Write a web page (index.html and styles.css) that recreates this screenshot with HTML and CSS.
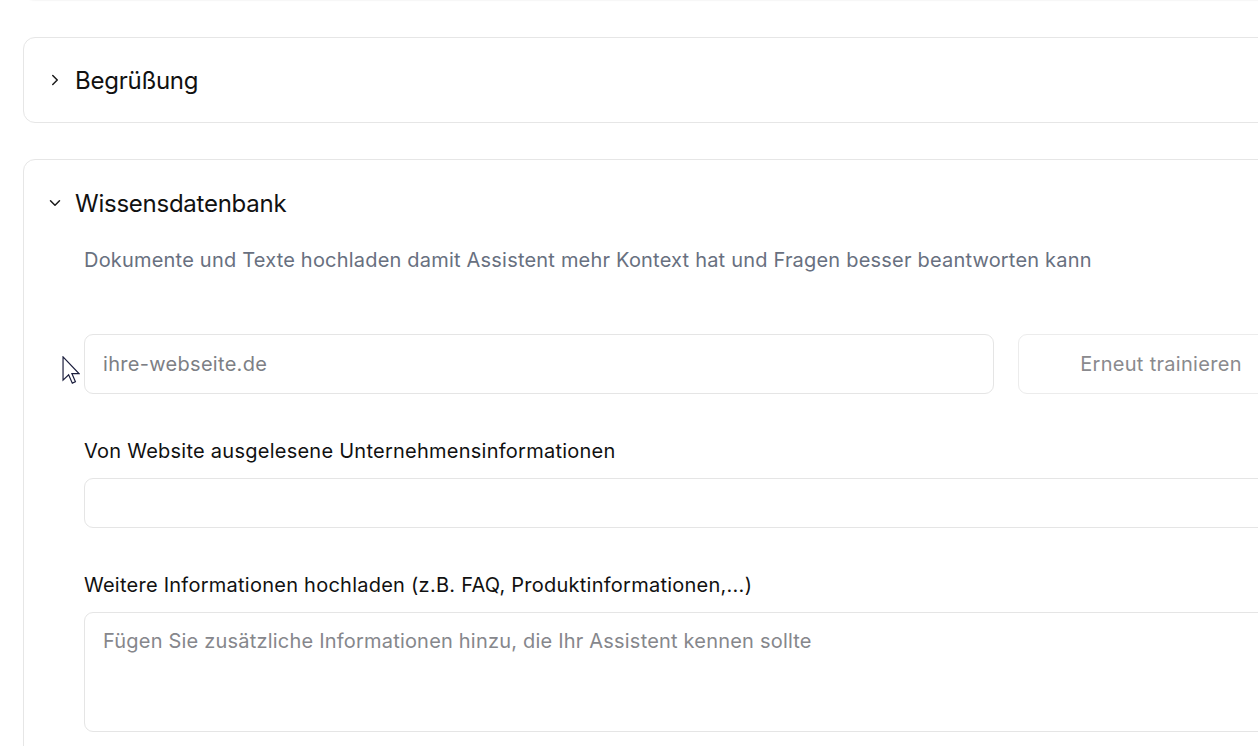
FILE: index.html
```html
<!doctype html>
<html>
<head>
<meta charset="utf-8">
<title>Assistent – Einstellungen</title>
<link rel="stylesheet" href="styles.css">
</head>
<body>
	<div class="page">
		<div class="card card_prev"></div>

		<div class="card">
			<div class="card_head">
				<svg class="chev" viewBox="0 0 24 24"><path d="M9 18l6-6-6-6"/></svg>
				<h2>Begrüßung</h2>
			</div>
		</div>

		<div class="card card_open">
			<div class="card_head">
				<svg class="chev" viewBox="0 0 24 24"><path d="M6 9l6 6 6-6"/></svg>
				<h2>Wissensdatenbank</h2>
			</div>
			<div class="card_body">
				<p class="desc">Dokumente und Texte hochladen damit Assistent mehr Kontext hat und Fragen besser beantworten kann</p>

				<div class="url_row">
					<input class="inp url_inp" type="text" placeholder="ihre-webseite.de">
					<a href="javascript:;" class="btn_train">Erneut trainieren</a>
				</div>

				<div class="field">
					<label>Von Website ausgelesene Unternehmensinformationen</label>
					<div class="inp inp_info"></div>
				</div>

				<div class="field">
					<label>Weitere Informationen hochladen (z.B. FAQ, Produktinformationen,...)</label>
					<textarea class="inp area" placeholder="Fügen Sie zusätzliche Informationen hinzu, die Ihr Assistent kennen sollte"></textarea>
				</div>
			</div>
		</div>
	</div>

	<svg class="cursor" viewBox="0 0 12 19"><path d="M0.6 0.6L0.6 16.4L4.4 12.7L6.9 18.4L9 17.5L6.6 11.9L11.4 11.9Z"/></svg>
</body>
</html>
```

FILE: styles.css
```css
*{margin:0; padding:0; box-sizing:border-box;}
html,body{overflow:hidden; height:100%;}
body{background:#fff; font-family:"Inter","Noto Sans",sans-serif; color:#111;}
.page{width:1340px; padding-left:23px;}

.card{background:#fff; border:1px solid #e6e6e6; border-radius:12px; margin-top:36px;}
.card_prev{height:100px; margin-top:-101px; border-color:#ececec; box-shadow:0 1px 2px rgba(0,0,0,.12);}
.card_prev + .card{margin-top:38px;}

.card_head{height:84px; display:flex; align-items:center; padding:0 22px; gap:11px;}
.card_head h2{font-size:24px; font-weight:400; letter-spacing:-0.25px; color:#111;}
.chev{width:18px; height:18px; fill:none; stroke:#1a1a1a; stroke-width:2; stroke-linecap:round; stroke-linejoin:round;}

.card_open .card_head{height:86px;}
.card_body{padding:0 0 40px 60px;}
.desc{font-size:20px; line-height:28px; letter-spacing:0.2px; color:#687080;}

.url_row{display:flex; gap:24px; margin-top:60px;}
.inp{display:block; border:1px solid #e5e5e5; border-radius:9px; background:#fff; font-family:inherit; outline:none;}
.url_inp{width:910px; height:60px; padding:0 18px; font-size:20px; letter-spacing:0.3px; color:#333;}
.url_inp::placeholder{color:#7d7f85;}
.btn_train{width:286px; height:60px; border:1px solid #ececec; border-radius:9px; display:flex; align-items:center; justify-content:center; font-size:20px; letter-spacing:0.3px; color:#8a8a8e; text-decoration:none;}

.field{margin-top:43px;}
.field label{display:block; font-size:20px; line-height:28px; letter-spacing:0.25px; color:#111; margin-bottom:13px;}
.inp_info{height:50px; width:100%;}
.area{width:100%; height:120px; padding:14px 18px; font-size:20px; line-height:28px; letter-spacing:0.2px; resize:none;}
.area::placeholder{color:#86878c;}

.cursor{position:absolute; left:62px; top:356px; width:18px; height:28px; fill:#fff; stroke:#1b1e3d; stroke-width:0.8; stroke-linejoin:miter;}
```
